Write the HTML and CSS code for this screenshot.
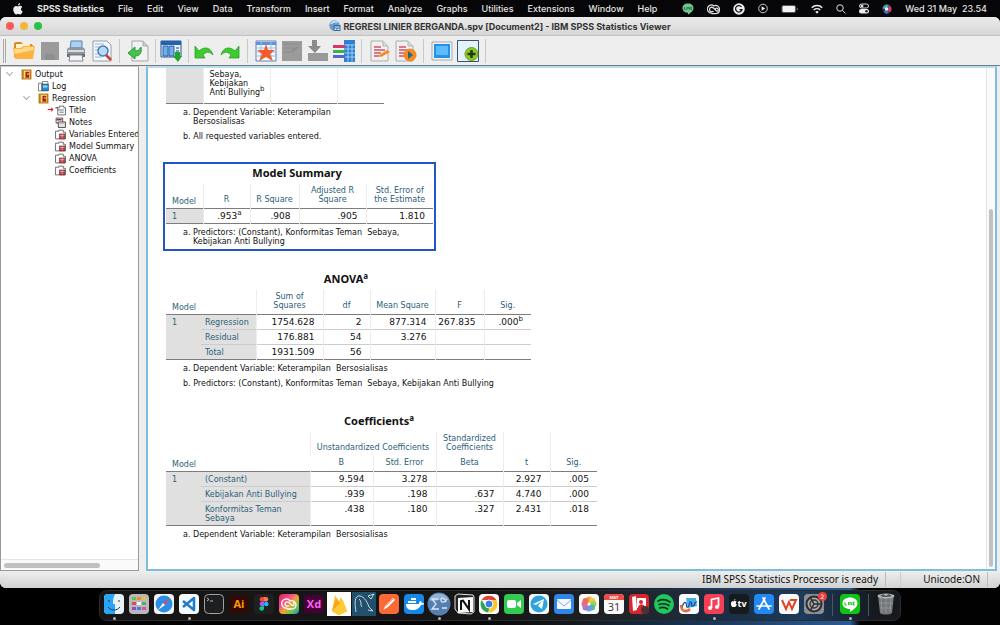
FILE: index.html
```html
<!DOCTYPE html>
<html lang="en">

<head>
    <meta charset="UTF-8">
    <meta name="viewport" content="width=device-width, initial-scale=1.0">
    <title>REGRESI LINIER BERGANDA.spv [Document2] - IBM SPSS Statistics Viewer</title>
    <link rel="stylesheet" href="styles.css">
</head>

<body>
    <header class="menubar">
        <svg class="apple" viewBox="0 0 20 24"><path fill="#eee" d="M14 0c.3 2.500-1.800 5-4.200 5C9.500 2.700 11.600.4 14 0zM10.200 6.800c1 0 2.300-1.200 4.200-1.200 1.500 0 3.200.8 4.200 2.300-3.800 2.300-3 7.600.8 9-1 2.700-3 6-5.200 6-1.500 0-2-.9-3.900-.9s-2.400.9-3.900.9C3.600 22.900.5 17.700.5 13c0-4.600 2.700-7.200 5.500-7.200 1.800 0 3.100 1 4.200 1z"/></svg>
        <nav class="menus">
            <button class="app-name">SPSS Statistics</button>
            <button>File</button>
            <button>Edit</button>
            <button>View</button>
            <button>Data</button>
            <button>Transform</button>
            <button>Insert</button>
            <button>Format</button>
            <button>Analyze</button>
            <button>Graphs</button>
            <button>Utilities</button>
            <button>Extensions</button>
            <button>Window</button>
            <button>Help</button>
        </nav>
        <div class="tray">
            <svg width="12" height="12" viewBox="0 0 24 24"><path fill="#6fc98c" d="M12 1c7 0 11 4 11 9.500 0 4.500-4 8-11 13v-4C5 19.500 1 16 1 10.500 1 5 5 1 12 1z"/><path d="M5 8v5h3M10 8v5M12 13V8l4 5V8M20 8h-2v5h2" fill="none" stroke="#245c38" stroke-width="1.500"/></svg>
            <svg width="13" height="12" viewBox="0 0 26 24" fill="none" stroke="#ddd" stroke-width="2.500"><path d="M9 20a8 8 0 1 1 5-14c5-3 11 1 11 7 0 5-3 8-8 8H9"/><path d="M13 16c-3 3-8 1-8-3s5-6 8-3l6 6c3 2 5-3 2-5-2-2-4 0-5 1"/></svg>
            <svg width="12" height="12" viewBox="0 0 24 24"><circle cx="12" cy="12" r="11.500" fill="#eee"/><path d="M17 8a6.500 6.500 0 1 0 1 5h-5" fill="none" stroke="#111" stroke-width="2.500"/></svg>
            <svg width="10" height="11" viewBox="0 0 22 22"><circle cx="11" cy="11" r="9.500" fill="none" stroke="#ddd" stroke-width="2"/><path d="M8 6l8 5-8 5z" fill="#eee"/></svg>
            <svg width="17" height="10" viewBox="0 0 34 20"><rect x="1" y="2" width="29" height="16" rx="4" fill="#555"/><rect x="3" y="4" width="25" height="12" rx="2" fill="#f2f2f2"/><path d="M31.500 7v6c3-1 3-5 0-6z" fill="#777"/></svg>
            <svg width="12" height="10" viewBox="0 0 24 20" fill="none" stroke="#eee" stroke-width="3"><path d="M1.500 7.500a15 15 0 0 1 21 0M5.500 12a9.500 9.500 0 0 1 13 0"/><path d="M8.500 15.500a5 5 0 0 1 7 0L12 19.500z" fill="#eee" stroke="none"/></svg>
            <svg width="10" height="10" viewBox="0 0 20 20" fill="none" stroke="#ddd" stroke-width="2"><circle cx="8" cy="8" r="6.500"/><path d="M13 13l6 6"/></svg>
            <svg width="10" height="11" viewBox="0 0 20 22"><rect x="1" y="2" width="18" height="8" rx="4" fill="none" stroke="#ddd" stroke-width="2"/><circle cx="6" cy="6" r="3" fill="#ddd"/><rect y="12" width="20" height="9" rx="4.500" fill="#eee"/><circle cx="15" cy="16.500" r="2.500" fill="#222"/></svg>
            <svg width="10" height="10" viewBox="0 0 20 20"><circle cx="10" cy="10" r="9.500" fill="#28274a"/><path d="M1 9a9 9 0 0 1 13-7L9 11z" fill="#3fa6a8"/><path d="M15 3a9 9 0 0 1 1 14l-7-6z" fill="#d1405c"/><path d="M3 16a9 9 0 0 0 11 2l-5-8z" fill="#3b6fd6"/><circle cx="9" cy="10" r="3.500" fill="#e8f4ff"/></svg>
            <time>Wed 31 May&nbsp; 23.54</time>
        </div>
    </header>

    <main class="window">
        <div class="titlebar">
            <div class="lights">
                <button class="light close" aria-label="Close"></button>
                <button class="light minimize" aria-label="Minimize"></button>
                <button class="light maximize" aria-label="Maximize"></button>
            </div>
            <h1>
                <svg width="12" height="12" viewBox="0 0 24 24"><circle cx="11" cy="11" r="10.500" fill="#6d9cc9"/><path d="M4 8a9 9 0 0 1 13-3" fill="none" stroke="#d3e5f5" stroke-width="3"/><rect x="9" y="10" width="14" height="12" rx="1" fill="#2e6ca8"/><path d="M11 13h10v2H11zM11 17h4v3h-4zM17 17h4v3h-4z" fill="#e3effa"/></svg>
                REGRESI LINIER BERGANDA.spv [Document2] - IBM SPSS Statistics Viewer
            </h1>
        </div>

        <div class="toolbar">
            <span class="grip"></span>
            <button aria-label="Open"><svg viewBox="0 0 22 22"><path d="M1 17V3l2-1h5l2 2h9l1 2v11z" fill="#d98a1f"/><path d="M3 4h14v5H3z" fill="#fff2c8"/><path d="M0 8h8l2-2h12l-2 13H2z" fill="#ffb23e"/><path d="M1 9h8l2-2h10l-.5 3L2 14z" fill="#ffd98c"/></svg></button>
            <button aria-label="Save"><svg viewBox="0 0 22 22"><path d="M2 2h18v18H2z" fill="#9a9a9a"/><path d="M6 14h10v6H6z" fill="#8f8f8f"/></svg></button>
            <button aria-label="Print"><svg viewBox="0 0 22 22"><path d="M6 1h11v9H5z" fill="#a9d2f5" stroke="#5382b0"/><path d="M2 9l3-2h12l3 2v8H2z" fill="#8f959c"/><path d="M3 10h16v2H3z" fill="#d9dde0"/><path d="M2 14h18v3H2z" fill="#666d75"/><path d="M5 15h12l1 6H4z" fill="#f1f3f5" stroke="#888"/></svg></button>
            <button aria-label="Print preview"><svg viewBox="0 0 22 22"><path d="M2 1h14l4 4v16H2z" fill="#f5f8fb" stroke="#94a0ab"/><path d="M4 4h9M4 7h5M4 10h3M4 14h3M4 17h7" stroke="#8cb8e0"/><circle cx="12" cy="11" r="5" fill="#b6dbf8" stroke="#4d78b5" stroke-width="1.500"/><path d="M15 15l5 5" stroke="#cc3d33" stroke-width="2.500"/></svg></button>
            <span class="sep"></span>
            <button aria-label="Export"><svg viewBox="0 0 22 22"><path d="M5 1h11l5 5v15H5z" fill="#f2f2f2" stroke="#a5a5a5"/><path d="M16 1v5h5" fill="#ccc" stroke="#aaa"/><path d="M14 7c1 6-1 9-6 9v3l-7-6 7-6v4c3 0 4-1 6-4z" fill="#44c24d" stroke="#2a9a38"/></svg></button>
            <span class="sep narrow"></span>
            <button aria-label="Recall dialogs"><svg viewBox="0 0 22 22"><path d="M1 1h20v16H1z" fill="#eaf3fb" stroke="#24518a"/><path d="M1 1h20v4H1z" fill="#2861ad"/><path d="M3 6h5v10H3zM9 6h5v10H9z" fill="#6eaee8" stroke="#2b65a5"/><path d="M16 7h3v2h-3zM16 10h3v2h-3z" fill="#7a9dbb"/><path d="M15 12h5v4h2l-4 6-5-6h2z" fill="#23a52d"/></svg></button>
            <span class="sep narrow"></span>
            <button aria-label="Undo"><svg viewBox="0 0 22 22"><path d="M2 6l4 5c5-5 12-4 14 4-4-4-7-3-10 0l2 3H2z" fill="#3ccd2c" stroke="#28912b" stroke-width=".7"/></svg></button>
            <button aria-label="Redo"><svg viewBox="0 0 22 22"><path d="M20 6l-4 5C11 6 4 7 2 15c4-4 7-3 10 0l-2 3h10z" fill="#3ccd2c" stroke="#28912b" stroke-width=".7"/></svg></button>
            <span class="sep"></span>
            <button aria-label="Go to data"><svg viewBox="0 0 22 22"><path d="M1 1h20v20H1z" fill="#f3f8ff" stroke="#5a84bd"/><path d="M1 2h20v3H1z" fill="#5f93d6"/><path d="M1 8h20M1 12h20M1 16h20M6 1v20M16 1v20" stroke="#9dbde3"/><path d="M11 4l2 6h7l-5 4 3 7-7-4-7 4 3-7-5-4h7z" fill="#f75a29"/></svg></button>
            <button aria-label="Go to case"><svg viewBox="0 0 22 22"><path d="M1 1h20v20H1z" fill="#9b9b9b"/><path d="M3 4h16M3 8h10M3 12h6" stroke="#8b8b8b"/><path d="M10 12l7-5" stroke="#8b8b8b" stroke-width="2"/></svg></button>
            <button aria-label="Go to variable"><svg viewBox="0 0 22 22"><path d="M5 0h5v6h4l-6 7-7-7h4z" fill="#8b8b8b"/><path d="M1 13h20v8H1z" fill="#999"/></svg></button>
            <button aria-label="Variables"><svg viewBox="0 0 22 22"><path d="M11 0h11v22H11z" fill="#2f80d1"/><path d="M11 5h11M11 9h11M11 13h11M11 17h11M15 4v18M19 4v18" stroke="#b8dcff" stroke-width=".8"/><path d="M0 5h12v3H0z" fill="#d63868"/><path d="M0 10h12v3H0z" fill="#36b54a"/><path d="M0 15h12v3H0z" fill="#5e62cf"/></svg></button>
            <span class="sep"></span>
            <button aria-label="Edit output"><svg viewBox="0 0 22 22"><path d="M2 1h12l5 5v15H2z" fill="#f0f0f0" stroke="#adadad"/><path d="M14 1v5h5" fill="#ddd" stroke="#b5b5b5"/><path d="M5 7h7M5 10h11M5 13h7M5 16h5" stroke="#d65162" stroke-width="1.500"/><path d="M9 16l9-6 3 2-9 5z" fill="#f28c1e"/></svg></button>
            <button aria-label="Run script"><svg viewBox="0 0 22 22"><path d="M1 1h12l5 5v15H1z" fill="#f0f0f0" stroke="#adadad"/><path d="M13 1v5h5" fill="#ddd" stroke="#b5b5b5"/><path d="M4 7h7M4 10h8M4 13h6M4 16h5" stroke="#d65162" stroke-width="1.500"/><circle cx="15" cy="15" r="6.500" fill="#f28b22"/><path d="M13 11l5 4-5 4z" fill="#28628e"/></svg></button>
            <span class="sep"></span>
            <button aria-label="Designate window"><svg viewBox="0 0 22 22"><path d="M1 2h20v18H1z" fill="#f4f4f4" stroke="#9eaab5"/><path d="M3 4h16v14H3z" fill="#2690ea"/><path d="M5 6h12v9H5z" fill="#5cbcff"/></svg></button>
            <button aria-label="Select last output"><svg viewBox="0 0 22 22"><path d="M.5.500h21v21H.5z" fill="#e4f3fb" stroke="#35536b"/><circle cx="14.500" cy="14" r="6.500" fill="#8cc924" stroke="#6c9d20"/><path d="M14.500 10v8M10.500 14h8" stroke="#1c3c10" stroke-width="2.500"/></svg></button>
            <span class="sep"></span>
        </div>

        <div class="panes">
            <aside class="outline">
                <ul class="tree">
                    <li><a href="#"><i class="chevron"></i><svg viewBox="0 0 20 20"><path d="M1 1h18v18H1z" fill="#bb7d17"/><path d="M5 3h11v14H5z" fill="#ffe27b"/><path d="M8 5h7v3h-4v2h4v6H8z" fill="#a82316"/></svg>Output</a>
                        <ul>
                            <li><a href="#"><i></i><svg viewBox="0 0 20 20"><path d="M1 4h6v14H1zM8 1h10v5H8z" fill="#fff" stroke="#222"/><path d="M7 6h12v12H7z" fill="#2d87c9" stroke="#143d60"/><path d="M9 8h8v4H9z" fill="#9bdcfa"/></svg>Log</a></li>
                            <li><a href="#"><i class="chevron"></i><svg viewBox="0 0 20 20"><path d="M1 1h18v18H1z" fill="#bb7d17"/><path d="M5 3h11v14H5z" fill="#ffe27b"/><path d="M8 5h7v3h-4v2h4v6H8z" fill="#a82316"/></svg>Regression</a>
                                <ul>
                                    <li><a href="#"><i class="current"></i><svg viewBox="0 0 20 20"><path d="M1 5h4v13h14V5h-3V2H8v3H1z" fill="#fff" stroke="#555" stroke-width="1.500"/><path d="M5 9h11M8 13h8" stroke="#555" stroke-width="1.500"/></svg>Title</a></li>
                                    <li><a href="#"><i></i><svg viewBox="0 0 20 20"><path d="M2 2h12v9H2z" fill="#fff" stroke="#333" stroke-width="1.500"/><path d="M3 5h9" stroke="#a12839" stroke-width="3"/><path d="M6 9h13v10H6z" fill="#ece3e5" stroke="#333" stroke-width="1.500"/><path d="M8 12h9" stroke="#999"/></svg>Notes</a></li>
                                    <li><a href="#"><i></i><svg viewBox="0 0 20 20"><path d="M1 4h6V2h8v4h4v12H1z" fill="#fff" stroke="#555" stroke-width="1.500"/><path d="M8 9h10v9H8z" fill="#c23e49" stroke="#60262b"/><path d="M9 12h8M13 9v8" stroke="#f3d7da"/></svg>Variables Entered</a></li>
                                    <li><a href="#"><i></i><svg viewBox="0 0 20 20"><path d="M1 4h6V2h8v4h4v12H1z" fill="#fff" stroke="#555" stroke-width="1.500"/><path d="M8 9h10v9H8z" fill="#c23e49" stroke="#60262b"/><path d="M9 12h8M13 9v8" stroke="#f3d7da"/></svg>Model Summary</a></li>
                                    <li><a href="#"><i></i><svg viewBox="0 0 20 20"><path d="M1 4h6V2h8v4h4v12H1z" fill="#fff" stroke="#555" stroke-width="1.500"/><path d="M8 9h10v9H8z" fill="#c23e49" stroke="#60262b"/><path d="M9 12h8M13 9v8" stroke="#f3d7da"/></svg>ANOVA</a></li>
                                    <li><a href="#"><i></i><svg viewBox="0 0 20 20"><path d="M1 4h6V2h8v4h4v12H1z" fill="#fff" stroke="#555" stroke-width="1.500"/><path d="M8 9h10v9H8z" fill="#c23e49" stroke="#60262b"/><path d="M9 12h8M13 9v8" stroke="#f3d7da"/></svg>Coefficients</a></li>
                                </ul>
                            </li>
                        </ul>
                    </li>
                </ul>
                <div class="hscroll"><div class="thumb"></div></div>
            </aside>

            <section class="viewer">
                <div class="content">
                    <div class="block entered">
                        <table>
                            <colgroup><col class="w37"><col class="w67"><col class="w67"><col class="w47"></colgroup>
                            <tbody>
                                <tr>
                                    <th></th>
                                    <td class="text">Sebaya,<br>Kebijakan<br>Anti Bullying<sup>b</sup></td>
                                    <td></td>
                                    <td></td>
                                </tr>
                            </tbody>
                        </table>
                        <p class="note">a. Dependent Variable: Keterampilan<br>Bersosialisas</p>
                        <p class="note">b. All requested variables entered.</p>
                    </div>

                    <div class="block selected">
                        <h2>Model Summary</h2>
                        <table>
                            <colgroup><col class="w37"><col class="w47"><col class="w49"><col class="w67"><col class="w67"></colgroup>
                            <thead>
                                <tr>
                                    <th class="left">Model</th>
                                    <th>R</th>
                                    <th>R Square</th>
                                    <th>Adjusted R<br>Square</th>
                                    <th>Std. Error of<br>the Estimate</th>
                                </tr>
                            </thead>
                            <tbody>
                                <tr>
                                    <th>1</th>
                                    <td>.953<sup>a</sup></td>
                                    <td>.908</td>
                                    <td>.905</td>
                                    <td>1.810</td>
                                </tr>
                            </tbody>
                        </table>
                        <p class="note">a. Predictors: (Constant), Konformitas Teman&nbsp; Sebaya,<br>Kebijakan Anti Bullying</p>
                    </div>

                    <div class="block anova">
                        <h2>ANOVA<sup>a</sup></h2>
                        <table>
                            <colgroup><col class="w35"><col class="w55"><col class="w67"><col class="w47"><col class="w65"><col class="w49"><col class="w47"></colgroup>
                            <thead>
                                <tr>
                                    <th class="left" colspan="2">Model</th>
                                    <th>Sum of<br>Squares</th>
                                    <th>df</th>
                                    <th>Mean Square</th>
                                    <th>F</th>
                                    <th>Sig.</th>
                                </tr>
                            </thead>
                            <tbody>
                                <tr>
                                    <th rowspan="3">1</th>
                                    <th>Regression</th>
                                    <td>1754.628</td>
                                    <td>2</td>
                                    <td>877.314</td>
                                    <td>267.835</td>
                                    <td>.000<sup>b</sup></td>
                                </tr>
                                <tr>
                                    <th>Residual</th>
                                    <td>176.881</td>
                                    <td>54</td>
                                    <td>3.276</td>
                                    <td></td>
                                    <td></td>
                                </tr>
                                <tr>
                                    <th>Total</th>
                                    <td>1931.509</td>
                                    <td>56</td>
                                    <td></td>
                                    <td></td>
                                    <td></td>
                                </tr>
                            </tbody>
                        </table>
                        <p class="note">a. Dependent Variable: Keterampilan&nbsp; Bersosialisas</p>
                        <p class="note">b. Predictors: (Constant), Konformitas Teman&nbsp; Sebaya, Kebijakan Anti Bullying</p>
                    </div>

                    <div class="block coefficients">
                        <h2>Coefficients<sup>a</sup></h2>
                        <table>
                            <colgroup><col class="w35"><col class="w109"><col class="w63"><col class="w63"><col class="w67"><col class="w47"><col class="w47"></colgroup>
                            <thead>
                                <tr>
                                    <th class="left" colspan="2" rowspan="2">Model</th>
                                    <th colspan="2">Unstandardized Coefficients</th>
                                    <th>Standardized<br>Coefficients</th>
                                    <th rowspan="2">t</th>
                                    <th rowspan="2">Sig.</th>
                                </tr>
                                <tr>
                                    <th>B</th>
                                    <th>Std. Error</th>
                                    <th>Beta</th>
                                </tr>
                            </thead>
                            <tbody>
                                <tr>
                                    <th rowspan="3">1</th>
                                    <th>(Constant)</th>
                                    <td>9.594</td>
                                    <td>3.278</td>
                                    <td></td>
                                    <td>2.927</td>
                                    <td>.005</td>
                                </tr>
                                <tr>
                                    <th>Kebijakan Anti Bullying</th>
                                    <td>.939</td>
                                    <td>.198</td>
                                    <td>.637</td>
                                    <td>4.740</td>
                                    <td>.000</td>
                                </tr>
                                <tr>
                                    <th>Konformitas Teman<br>Sebaya</th>
                                    <td>.438</td>
                                    <td>.180</td>
                                    <td>.327</td>
                                    <td>2.431</td>
                                    <td>.018</td>
                                </tr>
                            </tbody>
                        </table>
                        <p class="note">a. Dependent Variable: Keterampilan&nbsp; Bersosialisas</p>
                    </div>
                </div>
                <div class="vscroll"><div class="thumb"></div></div>
            </section>
        </div>

        <footer class="status">
            <span class="message">IBM SPSS Statistics Processor is ready</span>
            <span class="cell"></span>
            <span class="unicode">Unicode:ON</span>
        </footer>
    </main>

    <div class="desktop">
        <nav class="dock">
            <a class="running" href="#" aria-label="Finder"><svg viewBox="0 0 24 24"><rect x="2" y="2" width="20" height="20" rx="4" fill="#e9f1f8"/><path d="M6 2h7c-2 4-2 7-2 10h2v10H6a4 4 0 0 1-4-4V6a4 4 0 0 1 4-4z" fill="#2ba5f5"/><path d="M7 8v2M17 8v2M6 15c3 4 9 4 12 0" fill="none" stroke="#17395c"/></svg></a>
            <a href="#" aria-label="Launchpad"><svg viewBox="0 0 24 24"><rect x="2" y="2" width="20" height="20" rx="4" fill="#b9b9bd"/><path d="M5 5h4v3H5z" fill="#6bc04b"/><path d="M10 5h4v3h-4z" fill="#f0883a"/><path d="M15 5h4v3h-4z" fill="#f2c037"/><path d="M5 10h4v3H5z" fill="#e24a44"/><path d="M10 10h4v3h-4z" fill="#f5f5f5"/><path d="M15 10h4v3h-4z" fill="#4cb35c"/><path d="M5 15h4v3H5z" fill="#8a4fc7"/><path d="M10 15h4v3h-4z" fill="#3f7fe0"/><path d="M15 15h4v3h-4z" fill="#e0509a"/></svg></a>
            <a href="#" aria-label="Safari"><svg viewBox="0 0 24 24"><rect x="2" y="2" width="20" height="20" rx="4" fill="#f2f4f6"/><circle cx="12" cy="12" r="8.500" fill="#2d8de8"/><path d="M18 6l-5 7-2-2z" fill="#f0463c"/><path d="M6 18l5-7 2 2z" fill="#fff"/></svg></a>
            <a class="running" href="#" aria-label="Visual Studio Code"><svg viewBox="0 0 24 24"><rect x="2" y="2" width="20" height="20" rx="4" fill="#f7fafc"/><path d="M6 9l11 9V6L6 15" fill="none" stroke="#1f7cc8" stroke-width="2.500" stroke-linejoin="round"/></svg></a>
            <a href="#" aria-label="Terminal"><svg viewBox="0 0 24 24"><rect x="2.500" y="2.500" width="19" height="19" rx="4" fill="#1d1f20" stroke="#a2a2a2"/><path d="M5 6l2 1.500L5 9M8 9h3" fill="none" stroke="#ddd" stroke-width=".8"/></svg></a>
            <a href="#" aria-label="Illustrator"><svg viewBox="0 0 24 24"><rect x="2" y="3" width="20" height="18" rx="3" fill="#330a03"/><text x="12" y="16" class="adobe ai">Ai</text></svg></a>
            <a href="#" aria-label="Figma"><svg viewBox="0 0 24 24"><rect x="2" y="2" width="20" height="20" rx="4" fill="#202020"/><path d="M12 5h-2a2.300 2.300 0 0 0 0 4.600h2z" fill="#f24e1e"/><path d="M12 5h2a2.300 2.300 0 0 1 0 4.600h-2z" fill="#ff7262"/><path d="M12 9.600h-2a2.300 2.300 0 0 0 0 4.600h2z" fill="#a259ff"/><circle cx="14.300" cy="12" r="2.300" fill="#1abcfe"/><path d="M12 14.200h-2a2.300 2.300 0 1 0 2 2.300z" fill="#0acf83"/></svg></a>
            <a href="#" aria-label="Creative Cloud"><svg viewBox="0 0 24 24"><defs><linearGradient id="cc" x2="1" y2="1"><stop stop-color="#e22b2f"/><stop offset=".3" stop-color="#f0449a"/><stop offset=".55" stop-color="#f0a432"/><stop offset=".8" stop-color="#55c457"/><stop offset="1" stop-color="#3c6de8"/></linearGradient></defs><rect x="2" y="2" width="20" height="20" rx="4" fill="url(#cc)"/><path d="M10 16a4.500 4.500 0 1 1 3-7c3-1 6 1 6 4s-2 4-5 4h-4M12 13.500c-2 1.500-4 0-4-1.500s2-3 4-1.500l3 3c2 1 3-2 1-3" fill="none" stroke="#fff" stroke-width="1.300"/></svg></a>
            <a href="#" aria-label="Adobe XD"><svg viewBox="0 0 24 24"><rect x="2" y="3" width="20" height="18" rx="3" fill="#450135"/><text x="12" y="16" class="adobe xd">Xd</text></svg></a>
            <a href="#" aria-label="Firebase"><svg viewBox="0 0 24 24"><path d="M0 0h24v24H0z" fill="#fff"/><path d="M5 19L8 3l4 6 2-4 6 14-8 4z" fill="#ffc830"/><path d="M5 19L9 7l11 12-8 4z" fill="#f9a01e"/><path d="M5 19l11-11 4 11-8 4z" fill="#ffca35"/></svg></a>
            <a href="#" aria-label="MySQL Workbench"><svg viewBox="0 0 24 24"><path d="M0 0h24v24H0z" fill="#21506d"/><path d="M4 20C3 13 2 6 6 4c5-1 9 5 11 11l4 4-5-1M7 7c3 2 1 6 3 8M16 4l6-2-3 5z" fill="none" stroke="#c7d8e2"/></svg></a>
            <a href="#" aria-label="Postman"><svg viewBox="0 0 24 24"><rect x="2" y="2" width="20" height="20" rx="4" fill="#fb6a35"/><path d="M6 18l3-5 7-7 2 2-7 7z" fill="#fff"/><path d="M9 14l7-7" stroke="#f6a484"/></svg></a>
            <a href="#" aria-label="Docker"><svg viewBox="0 0 24 24"><rect x="2" y="2" width="20" height="20" rx="4" fill="#1688e8"/><path d="M4 12h13c0-2 1-3 2-3l1 2h2c0 2-2 2-3 2-2 4-5 5-8 5-5 0-7-2-7-6zM6 9h8v2H6zM9 6h5v2H9z" fill="#fff"/></svg></a>
            <a class="running" href="#" aria-label="SPSS Statistics"><svg viewBox="0 0 24 24"><circle cx="12" cy="12" r="11.500" fill="#547fb0"/><path d="M2 8a11 11 0 0 1 20 0c-6-3-14 3-20 0z" fill="#8fb2d6"/><path d="M11 7H5l4 5-4 5h7M20 7c-2 4-6 4-6 1s4-2 5 2M15 16h5" fill="none" stroke="#dce9f6" stroke-width="1.300"/></svg></a>
            <a href="#" aria-label="Notion"><svg viewBox="0 0 24 24"><path d="M3 4l3-2 15 1 1 2v15l-3 2-13-1-3-4z" fill="#222" stroke="#e4e4e4"/><path d="M6 6l15-1v15l-15 1z" fill="#f8f8f8"/><path d="M9 18V9l2-.3 6 8.600V8" fill="none" stroke="#111" stroke-width="2"/></svg></a>
            <a class="running" href="#" aria-label="Chrome"><svg viewBox="0 0 24 24"><rect x="2" y="2" width="20" height="20" rx="4" fill="#fafafa"/><path d="M4.600 8a8.500 8.500 0 0 1 14.800 0H12z" fill="#e44135"/><path d="M4.600 8a8.500 8.500 0 0 0 6.400 12.500l2-5.500-4.500-1z" fill="#31a352"/><path d="M19.400 8A8.500 8.500 0 0 1 11 20.500L16 12l-1-4z" fill="#fcc72b"/><circle cx="12" cy="12" r="4" fill="#3d7fe8" stroke="#fff"/></svg></a>
            <a href="#" aria-label="FaceTime"><svg viewBox="0 0 24 24"><rect x="2" y="2" width="20" height="20" rx="4" fill="#34c953"/><rect x="5" y="8" width="9" height="8" rx="2" fill="#fff"/><path d="M15 11l4-3v8l-4-3z" fill="#fff"/></svg></a>
            <a href="#" aria-label="Telegram"><svg viewBox="0 0 24 24"><rect x="2" y="2" width="20" height="20" rx="4" fill="#f4f8fb"/><circle cx="12" cy="12" r="8.500" fill="#2fa4dc"/><path d="M6 12l11-5-2 10-4-3 4-5-6 4z" fill="#fff"/></svg></a>
            <a href="#" aria-label="Mail"><svg viewBox="0 0 24 24"><rect x="2" y="2" width="20" height="20" rx="4" fill="#2f86ea"/><rect x="5" y="7" width="14" height="10" rx="1" fill="#f4f8fd"/><path d="M5 8l7 6 7-6" fill="none" stroke="#8aaed5"/></svg></a>
            <a href="#" aria-label="Photos"><svg viewBox="0 0 24 24"><rect x="2" y="2" width="20" height="20" rx="4" fill="#fafafa"/><g opacity=".85"><circle cx="12" cy="7.500" r="3" fill="#f59a23"/><circle cx="15.500" cy="9" r="3" fill="#e9c91e"/><circle cx="16.500" cy="12" r="3" fill="#91c640"/><circle cx="15" cy="15.500" r="3" fill="#3fae80"/><circle cx="12" cy="16.500" r="3" fill="#4a92de"/><circle cx="8.500" cy="15.500" r="3" fill="#8a68c5"/><circle cx="7.500" cy="12" r="3" fill="#cf5a9a"/><circle cx="8.500" cy="9" r="3" fill="#ec5345"/></g></svg></a>
            <a href="#" aria-label="Calendar"><svg viewBox="0 0 24 24"><rect x="2" y="2" width="20" height="20" rx="4" fill="#fafafa"/><path d="M6 2h12a4 4 0 0 1 4 4v2H2V6a4 4 0 0 1 4-4z" fill="#ee4b45"/><text x="12" y="7" class="month">MAY</text><text x="12" y="19" class="day">31</text></svg></a>
            <a href="#" aria-label="Photo Booth"><svg viewBox="0 0 24 24"><rect x="2" y="2" width="20" height="20" rx="4" fill="#d9252d"/><path d="M5 5l4-1 1 14-4 1zM10 6h9v10h-9z" fill="#fff"/><circle cx="14" cy="10" r="2" fill="#d9252d"/><path d="M11 16c0-5 7-5 7 0z" fill="#d9252d"/><circle cx="18" cy="18" r="4" fill="#4a3034"/></svg></a>
            <a href="#" aria-label="Spotify"><svg viewBox="0 0 24 24"><circle cx="12" cy="12" r="10" fill="#1fc75c"/><path d="M6 9c4-2 9-1 12 1M7 12.500c3-1 7-1 10 1M7.500 16c3-1 6-.5 8 1" fill="none" stroke="#14301f" stroke-width="1.700" stroke-linecap="round"/></svg></a>
            <a href="#" aria-label="Freeform"><svg viewBox="0 0 24 24"><rect x="2" y="2" width="20" height="20" rx="4" fill="#fafafa"/><path d="M9 6h10l1 8-9 2z" fill="#3fb0ec"/><path d="M5 17c0-5 3-8 4-6s0 5 2 4 1-6 3-5-1 5 2 4 1-5 4-4" fill="none" stroke="#1e4f92" stroke-width="1.300"/><path d="M4 13c0 6 5 8 9 4" fill="none" stroke="#ee6a3f" stroke-width="2.500"/></svg></a>
            <a class="running" href="#" aria-label="Music"><svg viewBox="0 0 24 24"><rect x="2" y="2" width="20" height="20" rx="4" fill="#f63f57"/><path d="M9.500 16V7.500l7-1.500v8.500" fill="none" stroke="#fff" stroke-width="1.700"/><circle cx="8" cy="16" r="2" fill="#fff"/><circle cx="15" cy="15" r="2" fill="#fff"/></svg></a>
            <a href="#" aria-label="Apple TV"><svg viewBox="0 0 24 24"><rect x="2" y="2" width="20" height="20" rx="4" fill="#171a1c"/><path d="M7 8.500c0-1 .6-1.500 1.300-1.600 0 1-.5 1.500-1.300 1.600zM7 9.500c1-.7 2.300-.4 2.600.2-1.200.7-1 2.300.3 2.900C8.500 15.500 8 14.900 7 14.900c-1 0-1.500.5-2.500-1-1.200-2.200-.5-5.200 2.500-4.400z" fill="#fff"/><text x="15" y="15" class="tv">tv</text></svg></a>
            <a href="#" aria-label="App Store"><svg viewBox="0 0 24 24"><rect x="2" y="2" width="20" height="20" rx="4" fill="#2389f2"/><path d="M13 6L7 17M11 6l6 11M5 14h14" stroke="#fff" stroke-width="1.700" stroke-linecap="round"/></svg></a>
            <a href="#" aria-label="WPS Office"><svg viewBox="0 0 24 24"><rect x="2" y="2" width="20" height="20" rx="4" fill="#fafafa"/><path d="M5 8l4 9 3-7 3 7 4-9h-6" fill="none" stroke="#e0432b" stroke-width="2"/></svg></a>
            <a href="#" aria-label="System Settings"><svg viewBox="0 0 24 24"><rect x="2" y="2" width="20" height="20" rx="4" fill="#8d8f93"/><circle cx="12" cy="12" r="7.500" fill="#a9abae" stroke="#2d2e30" stroke-width="2"/><circle cx="12" cy="12" r="4" fill="none" stroke="#333" stroke-width="1.500"/><path d="M12 12h7M12 12L8.500 6M12 12l-3.500 6" stroke="#333" stroke-width="1.500"/></svg><span class="badge">2</span></a>
            <span class="divider"></span>
            <a class="running" href="#" aria-label="LINE"><svg viewBox="0 0 24 24"><rect x="2" y="2" width="20" height="20" rx="4" fill="#12c317"/><path d="M12 5.500c4.500 0 7.500 2.500 7.500 6 0 3-3 5.500-7.500 8.500v-3c-4.500 0-7.500-2.500-7.500-5.500 0-3.500 3-6 7.500-6z" fill="#fff"/><path d="M7 10v3h2M10.500 10v3M12 13v-3l2 3v-3M17 10h-1.500v3H17" fill="none" stroke="#12c317" stroke-width=".9"/></svg></a>
            <span class="divider"></span>
            <a href="#" aria-label="Trash"><svg viewBox="0 0 24 24"><path d="M4 3h16l-2 18c-2 2-10 2-12 0z" fill="#73777a"/><path d="M7 6l1 14M12 6v15M17 6l-1 14M5 11h14M6 16h12" stroke="#9b9fa2" stroke-width=".7"/><ellipse cx="12" cy="4" rx="8.500" ry="2.500" fill="#b4b6b8"/><path d="M6 4l3-2 3 2 3-2 3 2-4 1H9z" fill="#54575a"/></svg></a>
        </nav>
    </div>
</body>

</html>
```
FILE: styles.css
```css
/* General Reset */
* {
    margin: 0;
    padding: 0;
    box-sizing: border-box;
}

body {
    height: 100vh;
    display: flex;
    flex-direction: column;
    background: #000;
    font-family: 'DejaVu Sans', sans-serif;
    font-size: 8px;
    color: #111;
    overflow: hidden;
}

button {
    border: none;
    background: none;
    font: inherit;
    color: inherit;
}

a {
    color: inherit;
    text-decoration: none;
}

svg {
    display: block;
    flex-shrink: 0;
}

/* Menu bar */
.menubar {
    flex: 0 0 17px;
    display: flex;
    align-items: center;
    padding: 0 13px;
    background: #060507;
    color: #e4e4e4;
    font-family: Inter, sans-serif;
    font-size: 9px;
    font-weight: 500;
    line-height: 15px;
    white-space: nowrap;
}

.apple {
    width: 10px;
    height: 12px;
    margin-right: 14px;
}

.menus {
    display: flex;
    gap: 14px;
}

.menus .app-name {
    font-weight: 700;
}

.tray {
    display: flex;
    align-items: center;
    gap: 13px;
    margin-left: auto;
}

/* Window */
.window {
    flex: 1;
    min-height: 0;
    display: flex;
    flex-direction: column;
    background: #eee;
    border-radius: 6px;
    overflow: hidden;
}

.titlebar {
    flex: 0 0 19px;
    display: grid;
    grid-template-columns: 1fr auto 1fr;
    align-items: center;
    background: linear-gradient(#ebebeb, #d6d6d6);
    border-bottom: 1px solid #c0c0c0;
}

.lights {
    display: flex;
    gap: 6px;
    padding-left: 6px;
}

.light {
    width: 8px;
    height: 8px;
    border-radius: 50%;
}

.close {
    background: #fc5b57;
}

.minimize {
    background: #f4b63a;
}

.maximize {
    background: #2bc144;
}

h1 {
    display: flex;
    align-items: center;
    gap: 2px;
    font-family: Inter, sans-serif;
    font-size: 9px;
    font-weight: 700;
    color: #333;
}

/* Toolbar */
.toolbar {
    flex: 0 0 30px;
    display: flex;
    align-items: center;
    gap: 4px;
    padding: 0 3px;
    border-bottom: 1px solid #737b7f;
}

.toolbar svg {
    width: 22px;
    height: 22px;
}

.grip {
    width: 3px;
    height: 24px;
    margin-right: 3px;
    border-left: 1px solid #aaa;
    border-right: 1px solid #aaa;
}

.sep {
    width: 6px;
    height: 24px;
    background: linear-gradient(90deg, transparent 2px, #c9c9c9 2px, #c9c9c9 3px, transparent 3px);
}

.narrow {
    width: 3px;
}

/* Outline and output panes */
.panes {
    flex: 1;
    min-height: 0;
    display: flex;
    gap: 7px;
    padding: 0 3px 0 0;
}

.outline {
    flex: 0 0 139px;
    display: flex;
    flex-direction: column;
    justify-content: space-between;
    background: #fff;
    border: 1px solid #999;
    border-top-color: #ccc;
    overflow: hidden;
}

.tree {
    padding: 1px 0 0 3px;
    list-style: none;
    white-space: nowrap;
}

.tree ul {
    padding-left: 17px;
    list-style: none;
}

.tree a {
    display: flex;
    align-items: center;
    height: 12px;
}

.tree svg {
    width: 11px;
    height: 11px;
    margin-right: 3px;
}

.tree i {
    flex-shrink: 0;
    width: 17px;
    height: 8px;
    font-style: normal;
}

.tree .chevron::before {
    content: '';
    display: block;
    width: 4px;
    height: 4px;
    margin: 0 3px;
    border: solid #aaa;
    border-width: 0 1px 1px 0;
    transform: rotate(45deg);
}

.tree .current::before {
    content: '➜';
    display: block;
    font-size: 8px;
    font-weight: 700;
    line-height: 8px;
    text-align: right;
    padding-right: 1px;
    color: #e01922;
}

.hscroll {
    height: 11px;
    padding: 3px;
    border-top: 1px solid #e4e4e4;
    background: #fafafa;
}

.hscroll .thumb {
    width: 73%;
    height: 5px;
    border-radius: 3px;
    background: #c0c0c0;
}

.viewer {
    flex: 1;
    display: flex;
    background: #fff;
    border: 2px solid #7dbde0;
    border-top-color: #b7dff0;
    overflow: hidden;
}

.content {
    flex: 1;
    padding-left: 15px;
}

.vscroll {
    flex: 0 0 9px;
    display: flex;
    flex-direction: column;
    justify-content: flex-end;
    padding: 2px;
    border-left: 1px solid #e4e4e4;
    background: #fafafa;
}

.vscroll .thumb {
    height: 72%;
    border-radius: 3px;
    background: #c0c0c0;
}

/* Output blocks */
.block {
    width: fit-content;
    padding: 0 3px;
}

.selected {
    margin-top: 21px;
    padding: 0 1px 3px;
    border: 2px solid #2455c8;
}

.anova {
    margin-top: 19px;
}

.coefficients {
    margin-top: 24px;
}

h2 {
    margin-bottom: 3px;
    padding-right: 5px;
    font-family: 'Noto Sans', sans-serif;
    font-size: 11px;
    font-weight: 700;
    line-height: 17px;
    text-align: center;
}

sup {
    font-size: 7px;
    line-height: 0;
    vertical-align: 4px;
}

h2 sup {
    font-size: 8px;
}

table {
    table-layout: fixed;
    width: min-content;
    border-collapse: collapse;
    border-bottom: 1px solid #7d7d7d;
    line-height: 9px;
}

.w35 { width: 35px; }
.w37 { width: 37px; }
.w47 { width: 47px; }
.w49 { width: 49px; }
.w55 { width: 55px; }
.w63 { width: 63px; }
.w65 { width: 65px; }
.w67 { width: 67px; }
.w109 { width: 109px; }

th {
    font-weight: 400;
    color: #2d6078;
}

thead th {
    padding: 2px 0 4px;
    vertical-align: bottom;
    white-space: nowrap;
}

thead th + th {
    border-left: 1px solid #ececec;
}

thead .left {
    padding-left: 6px;
    padding-bottom: 2px;
    text-align: left;
}

thead + tbody {
    border-top: 1px solid #7d7d7d;
}

tbody th {
    padding: 3px 0 2px 6px;
    background: #e0e0e0;
    text-align: left;
    vertical-align: top;
    white-space: nowrap;
}

tbody td {
    padding: 3px 8px 2px 0;
    border-left: 1px solid #ececec;
    font-size: 9px;
    text-align: right;
    vertical-align: top;
}

tbody tr + tr th,
tbody tr + tr td {
    border-top: 1px solid #ccc;
}

tbody tr + tr th,
tbody th + th {
    padding-left: 4px;
}

tbody .text {
    padding: 2px 0 6px 6px;
    font-size: 8px;
    text-align: left;
    white-space: nowrap;
}

.note {
    padding: 4px 0 0 27px;
    line-height: 9px;
    text-indent: -10px;
}

.note + .note {
    padding-top: 6px;
}

/* Status bar */
.status {
    flex: 0 0 17px;
    display: flex;
    justify-content: flex-end;
    align-items: center;
    padding-right: 12px;
    background: linear-gradient(#eee, #d2d2d2);
    font-family: 'Noto Sans', sans-serif;
    font-size: 10px;
    line-height: 15px;
}

.message {
    padding-right: 7px;
    border-right: 1px solid #bbb;
}

.cell {
    width: 15px;
    height: 15px;
    border-right: 1px solid #ccc;
}

.unicode {
    width: 87px;
    padding-right: 7px;
    border-right: 1px solid #bbb;
    text-align: right;
}

/* Dock */
.desktop {
    flex: 0 0 37px;
    display: flex;
    justify-content: center;
    align-items: flex-start;
    padding-top: 2px;
    background: linear-gradient(90deg, #000 45%, #131416 55%, #16304e 68%, #2a5b95 85%, #020203 86%);
}

.dock {
    display: flex;
    gap: 1px;
    height: 31px;
    padding: 1px 2px;
    border: 1px solid #2b2c2e;
    border-radius: 8px;
    background: linear-gradient(90deg, #161617 50%, #202428 65%, #1b3048 80%, #1d3b5c 88%, #16191d 97%);
}

.dock a {
    position: relative;
    width: 24px;
    height: 28px;
}

.dock svg {
    width: 24px;
    height: 24px;
}

.running::after {
    content: '';
    position: absolute;
    left: 11px;
    bottom: 0;
    width: 3px;
    height: 3px;
    border-radius: 50%;
    background: #b5b5b5;
}

.badge {
    position: absolute;
    top: 0;
    right: -1px;
    width: 9px;
    height: 9px;
    border-radius: 50%;
    background: #f0403c;
    color: #fff;
    font-size: 6px;
    line-height: 9px;
    text-align: center;
}

.divider {
    width: 10px;
    height: 22px;
    margin-top: 2px;
    background: linear-gradient(90deg, transparent 5px, #4c5661 5px, #4c5661 6px, transparent 6px);
}

.dock text {
    text-anchor: middle;
    font-family: 'Open Sans', sans-serif;
    font-weight: 700;
}

.dock .adobe {
    font-size: 11px;
}

.ai {
    fill: #ff9a00;
}

.xd {
    fill: #ff61f6;
}

.dock .month {
    font-size: 4px;
    fill: #fff;
}

.dock .day {
    font-size: 11px;
    font-weight: 400;
    fill: #333;
}

.dock .tv {
    font-size: 9px;
    fill: #fff;
}
```
